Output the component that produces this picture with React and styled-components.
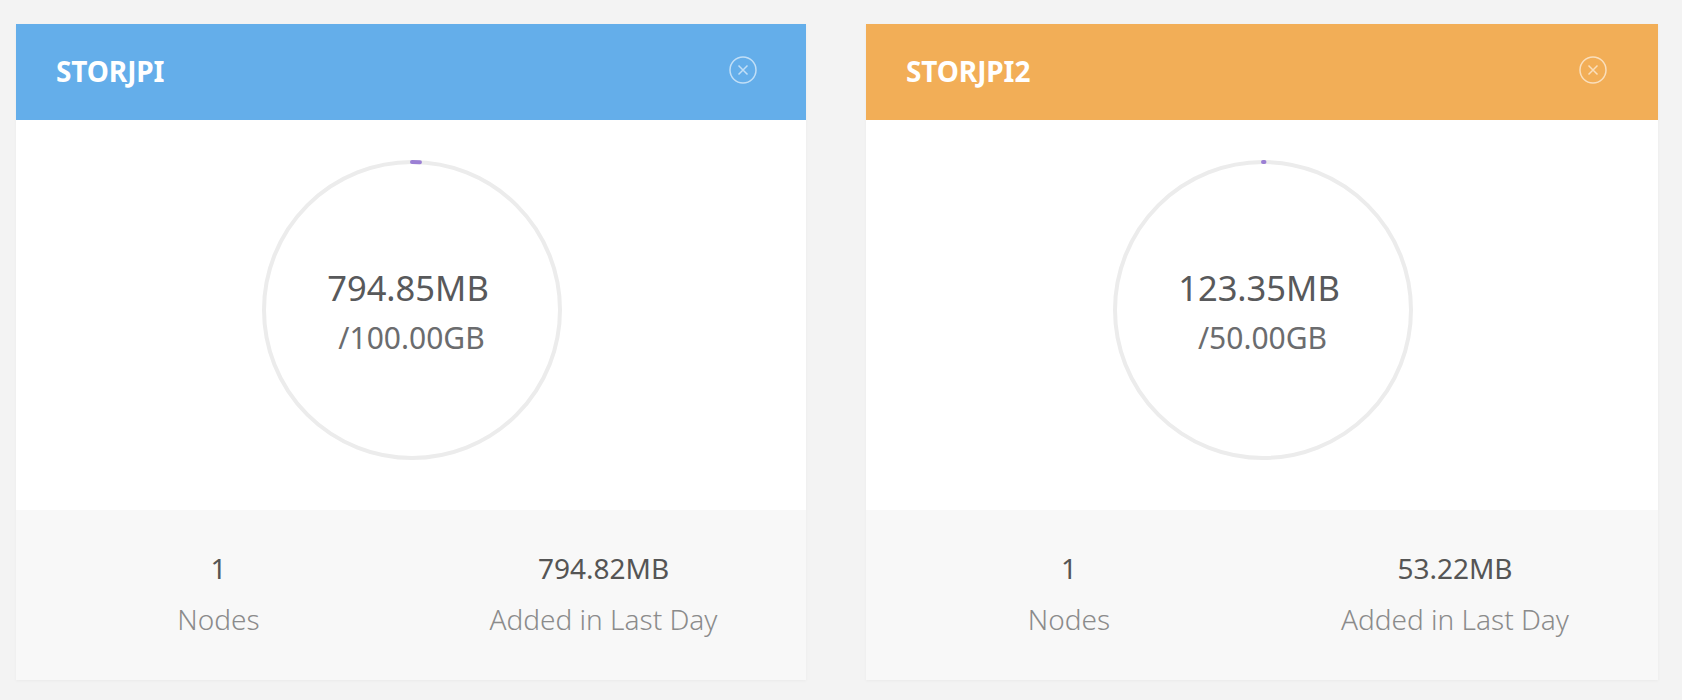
import React from "react";
import styled, { createGlobalStyle } from "styled-components";

const Global = createGlobalStyle`
  html, body { margin: 0; padding: 0; background: #f3f3f3; }
  body { font-family: "Noto Sans", "Open Sans", sans-serif; }
`;

const Page = styled.div`
  height: 700px;
  box-sizing: border-box;
  padding: 24px 24px 0 16px;
  display: grid;
  grid-template-columns: 790px 792px;
  column-gap: 60px;
  align-items: start;
  overflow: hidden;
`;

const Card = styled.section`
  height: 656px;
  display: flex;
  flex-direction: column;
  background: #fff;
  box-shadow: 0 1px 3px rgba(0, 0, 0, 0.04);
`;

const Header = styled.header`
  height: 96px;
  flex: none;
  display: flex;
  align-items: center;
  justify-content: space-between;
  padding: 0 ${(p) => p.$right}px 0 40px;
  background: ${(p) => p.$color};
`;

const Title = styled.h2`
  margin: -2px 0 0;
  font-size: 28px;
  font-weight: 700;
  letter-spacing: -0.1px;
  color: #fff;
`;

const CloseIcon = styled.svg`
  width: 28px;
  height: 28px;
  display: block;
  margin-top: -5px;
`;

const Body = styled.div`
  height: 390px;
  flex: none;
  display: flex;
  align-items: center;
  justify-content: center;
  padding: 0 0 10px 1px;
  box-sizing: border-box;
`;

const Gauge = styled.div`
  position: relative;
  width: 300px;
  height: 300px;
`;

const GaugeSvg = styled.svg`
  display: block;
  width: 300px;
  height: 300px;
`;

const GaugeText = styled.div`
  position: absolute;
  inset: 6px 0 0;
  display: flex;
  flex-direction: column;
  align-items: center;
  justify-content: center;
`;

const Used = styled.div`
  font-size: 34.5px;
  line-height: 50px;
  padding-right: 7px;
  color: #58595b;
`;

const Total = styled.div`
  font-size: 30px;
  line-height: 50px;
  color: #6b6c6e;
`;

const Footer = styled.footer`
  flex: 1;
  display: grid;
  grid-template-columns: 1fr 1fr;
  background: #f8f8f8;
  padding: 40px 10px 0;
`;

const Stat = styled.div`
  display: flex;
  flex-direction: column;
  align-items: center;
`;

const StatValue = styled.div`
  font-size: 28px;
  line-height: 36px;
  color: #555;
`;

const StatLabel = styled.div`
  margin-top: 14px;
  font-size: 28px;
  font-weight: 300;
  line-height: 38px;
  color: #8b8b8b;
`;

const R = 148;
const C = 2 * Math.PI * R;

function Ring({ arc }) {
  return (
    <GaugeSvg viewBox="0 0 300 300">
      <circle cx="150" cy="150" r={R} fill="none" stroke="#ececec" strokeWidth="4" />
      <circle
        cx="150"
        cy="150"
        r={R}
        fill="none"
        stroke="#9b7fd4"
        strokeWidth="4"
        strokeLinecap="round"
        strokeDasharray={`${arc} ${C - arc}`}
        transform="rotate(-90 150 150)"
      />
    </GaugeSvg>
  );
}

function Close() {
  return (
    <CloseIcon viewBox="0 0 28 28" fill="none" stroke="rgba(255,255,255,0.6)" strokeWidth="1.5">
      <circle cx="14" cy="14" r="13" />
      <path d="M9.5 9.5l9 9M18.5 9.5l-9 9" />
    </CloseIcon>
  );
}

const buckets = [
  { name: "STORJPI", color: "#64aeea", right: 49, used: "794.85MB", total: "/100.00GB", added: "794.82MB", arc: 8 },
  { name: "STORJPI2", color: "#f2ae57", right: 51, used: "123.35MB", total: "/50.00GB", added: "53.22MB", arc: 1.5 },
];

export default function App() {
  return (
    <>
      <Global />
      <Page>
        {buckets.map((b) => (
          <Card key={b.name}>
            <Header $color={b.color} $right={b.right}>
              <Title>{b.name}</Title>
              <Close />
            </Header>
            <Body>
              <Gauge>
                <Ring arc={b.arc} />
                <GaugeText>
                  <Used>{b.used}</Used>
                  <Total>{b.total}</Total>
                </GaugeText>
              </Gauge>
            </Body>
            <Footer>
              <Stat>
                <StatValue>1</StatValue>
                <StatLabel>Nodes</StatLabel>
              </Stat>
              <Stat>
                <StatValue>{b.added}</StatValue>
                <StatLabel>Added in Last Day</StatLabel>
              </Stat>
            </Footer>
          </Card>
        ))}
      </Page>
    </>
  );
}
